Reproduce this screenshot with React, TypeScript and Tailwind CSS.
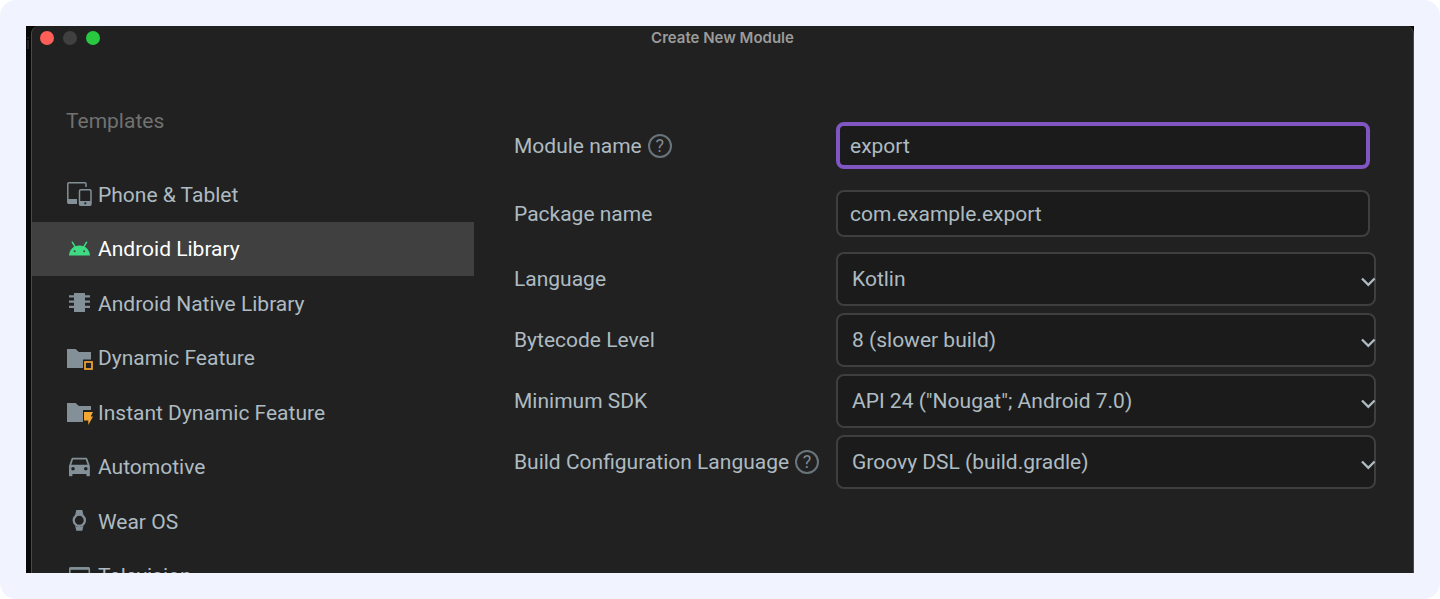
import { ReactNode } from "react";
import clsx from "clsx";

type Template = {
  name: string;
  icon: ReactNode;
};

type SelectRowProps = {
  id: string;
  label: string;
  options: string[];
  help?: boolean;
};

const templates: Template[] = [
  {
    name: "Phone & Tablet",
    icon: (
      <>
        <path
          d="M20 7V3.8a1 1 0 0 0-1-1H2.8a1 1 0 0 0-1 1V22a1 1 0 0 0 1 1H11"
          fill="none"
          stroke="currentColor"
          strokeWidth="1.5"
        />
        <path d="M1.5 19H11v5H2.5a1 1 0 0 1-1-1z" />
        <rect x="13.5" y="9.7" width="11.5" height="15.5" rx="1.5" fill="none" stroke="currentColor" strokeWidth="1.5" />
        <path d="M13.5 21H25v4.5H13.5z" />
        <circle cx="19.3" cy="23.3" r="1.1" fill="#212121" />
      </>
    ),
  },
  {
    name: "Android Library",
    icon: (
      <g fill="#3ddc84">
        <path d="M3 20.5C3.3 14.5 7.6 10.5 13.4 10.5S23.6 14.5 24 20.5z" />
        <path d="M6.3 7.2l3 5M20.6 7.2l-3 5" stroke="#3ddc84" strokeWidth="1.5" strokeLinecap="round" />
        <circle cx="8.6" cy="16.2" r="1" fill="#404040" />
        <circle cx="18.2" cy="16.2" r="1" fill="#404040" />
      </g>
    ),
  },
  {
    name: "Android Native Library",
    icon: <path d="M8 4h11v2.2h5v2.3h-5v3h5v2.3h-5v3h5v2.3h-5V23H8v-3.9H3v-2.3h5v-3H3v-2.3h5v-3H3V6.2h5z" />,
  },
  {
    name: "Dynamic Feature",
    icon: (
      <>
        <path d="M1 5h8.5l3.5 3h12v7.5h-8V24H1z" />
        <rect x="19" y="18" width="7" height="7" fill="none" stroke="#f4a732" strokeWidth="1.7" />
      </>
    ),
  },
  {
    name: "Instant Dynamic Feature",
    icon: (
      <>
        <path d="M1 5h8.5l3.5 3h12v4h-8v12H1z" />
        <path d="M18 14h9l-2.3 4.5H27L22.3 27v-4.5H18z" fill="#f4a732" />
      </>
    ),
  },
  {
    name: "Automotive",
    icon: (
      <path
        transform="translate(-0.5 -1) scale(1.16)"
        d="M18.92 6.01C18.72 5.42 18.16 5 17.5 5h-11c-.66 0-1.21.42-1.42 1.01L3 12v8c0 .55.45 1 1 1h1c.55 0 1-.45 1-1v-1h12v1c0 .55.45 1 1 1h1c.55 0 1-.45 1-1v-8l-2.08-5.99zM6.5 16c-.83 0-1.5-.67-1.5-1.5S5.67 13 6.5 13s1.5.67 1.5 1.5S7.33 16 6.5 16zm11 0c-.83 0-1.5-.67-1.5-1.5s.67-1.5 1.5-1.5 1.5.67 1.5 1.5-.67 1.5-1.5 1.5zM5 11l1.5-4.5h11L19 11H5z"
      />
    ),
  },
  {
    name: "Wear OS",
    icon: (
      <>
        <circle cx="13.3" cy="13.3" r="5.6" fill="none" stroke="currentColor" strokeWidth="2.3" />
        <path d="M10.3 3h6l1.2 5.3a7 7 0 0 0-8.4 0zM10.3 23.7h6l1.2-5.3a7 7 0 0 1-8.4 0z" />
      </>
    ),
  },
  {
    name: "Television",
    icon: (
      <>
        <rect x="3.8" y="6" width="19.5" height="14" rx="1" fill="none" stroke="currentColor" strokeWidth="1.6" />
        <path d="M3.5 5.2h20v2.6h-20z" />
      </>
    ),
  },
];

function TitleBar() {
  return (
    <header className="relative flex h-6 items-center justify-center">
      <div className="absolute left-2 flex gap-[9px]">
        <button aria-label="Close" className="size-3.5 rounded-full bg-[#ff5f57]" />
        <button aria-label="Minimize" className="size-3.5 rounded-full bg-[#404040]" />
        <button aria-label="Zoom" className="size-3.5 rounded-full bg-[#28c840]" />
      </div>
      <h1 className="font-['Inter',sans-serif] text-[15px] font-semibold text-[#9b9b9b]">Create New Module</h1>
    </header>
  );
}

function Sidebar() {
  return (
    <nav className="w-[442px] shrink-0 pt-14">
      <h2 className="pl-[34px] leading-[30px] text-[#717171]">Templates</h2>
      <ul className="mt-[31px] grid h-[436px] auto-rows-fr">
        {templates.map((item) => {
          const active = item.name === "Android Library";
          return (
            <li key={item.name}>
              <button
                className={clsx(
                  "flex h-full w-full items-center gap-1 pl-[34px]",
                  active ? "bg-[#404040] text-white" : "text-[#aebbc1]"
                )}
              >
                <svg viewBox="0 0 28 28" fill="currentColor" className="size-7 shrink-0 text-[#849097]">
                  {item.icon}
                </svg>
                <span className="pt-0.5">{item.name}</span>
              </button>
            </li>
          );
        })}
      </ul>
    </nav>
  );
}

function HelpButton() {
  return (
    <button
      aria-label="Help"
      className="flex size-6 shrink-0 items-center justify-center rounded-full border-2 border-[#69757b] text-lg leading-5 text-[#7e8a91]"
    >
      ?
    </button>
  );
}

function RowLabel({ id, label, help }: { id: string; label: string; help?: boolean }) {
  return (
    <div className="flex w-[322px] shrink-0 items-center gap-1.5">
      <label htmlFor={id} className="pt-0.5">
        {label}
      </label>
      {help && <HelpButton />}
    </div>
  );
}

function SelectRow({ id, label, options, help }: SelectRowProps) {
  return (
    <div className="flex items-center">
      <RowLabel id={id} label={label} help={help} />
      <div className="relative flex-1">
        <select
          id={id}
          className="block h-[54px] w-full appearance-none rounded-lg border-2 border-[#3f3f3f] bg-[#1b1b1b] px-3.5 pt-0.5 outline-none"
        >
          {options.map((option) => (
            <option key={option}>{option}</option>
          ))}
        </select>
        <svg
          viewBox="0 0 16 10"
          fill="none"
          stroke="#aebbc1"
          strokeWidth="2.3"
          className="pointer-events-none absolute right-0 top-[25px] h-2.5 w-4"
        >
          <path d="M2 1.5l6.3 6.3 6.3-6.3" />
        </svg>
      </div>
    </div>
  );
}

function ModuleForm() {
  return (
    <form className="min-w-0 flex-1 pl-10 pr-[37px] pt-[72px] text-[#aebbc1]">
      <div className="flex items-center pr-1.5">
        <RowLabel id="module-name" label="Module name" help />
        <input
          id="module-name"
          defaultValue="export"
          className="h-[47px] min-w-0 flex-1 rounded-lg border-4 border-[#8056c2] bg-[#1b1b1b] px-2.5 outline-none"
        />
      </div>
      <div className="mt-[21px] flex items-center pr-1.5">
        <RowLabel id="package-name" label="Package name" />
        <input
          id="package-name"
          defaultValue="com.example.export"
          className="h-[47px] min-w-0 flex-1 rounded-lg border-2 border-[#3f3f3f] bg-[#1b1b1b] px-3 outline-none"
        />
      </div>
      <div className="mt-[15px] flex flex-col gap-[7px]">
        <SelectRow id="language" label="Language" options={["Kotlin", "Java"]} />
        <SelectRow id="bytecode" label="Bytecode Level" options={["8 (slower build)"]} />
        <SelectRow id="min-sdk" label="Minimum SDK" options={['API 24 ("Nougat"; Android 7.0)']} />
        <SelectRow
          id="build-language"
          label="Build Configuration Language"
          options={["Groovy DSL (build.gradle)"]}
          help
        />
      </div>
    </form>
  );
}

export default function App() {
  return (
    <div className="h-screen bg-white font-['Roboto','Inter',sans-serif] text-[21px]">
      <div className="h-full rounded-2xl bg-[#f1f4fe] p-[26px]">
        <div className="relative h-full overflow-hidden bg-[#080808] pl-[5px]">
          {/* edge of the editor window behind the dialog */}
          <span aria-hidden="true" className="absolute left-0 top-1.5 text-base text-[#2e2e2e]">
            in
          </span>
          <main className="relative h-full overflow-hidden rounded-t-lg border-x border-[#4a4a4a] bg-[#212121]">
            <TitleBar />
            <div className="flex">
              <Sidebar />
              <ModuleForm />
            </div>
          </main>
        </div>
      </div>
    </div>
  );
}
